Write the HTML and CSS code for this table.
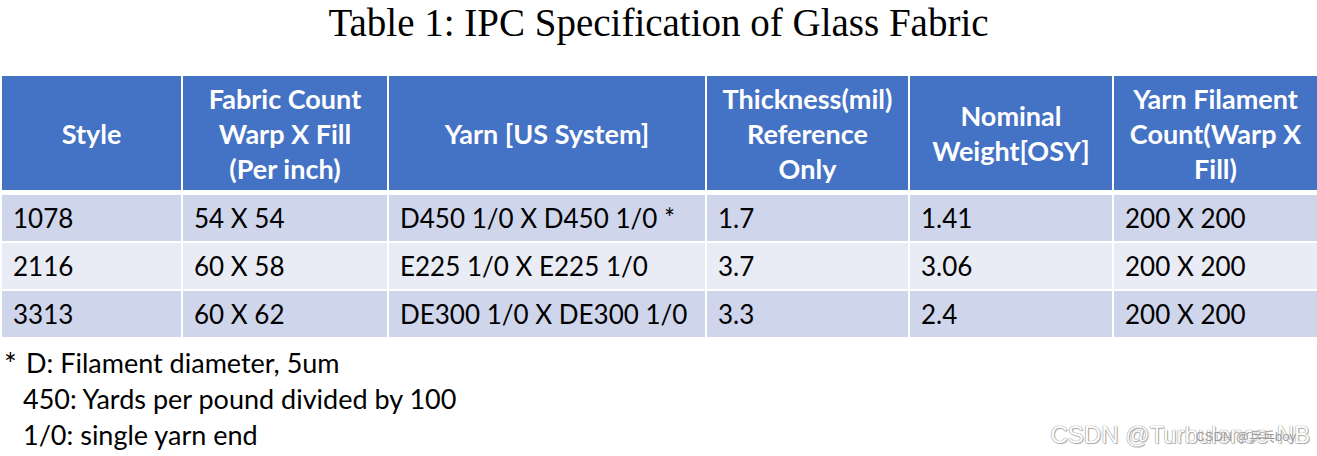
FILE: index.html
```html
<!DOCTYPE html>
<html lang="en">
<head>
<meta charset="utf-8">
<title>Table 1: IPC Specification of Glass Fabric</title>
<link rel="stylesheet" href="styles.css">
</head>
<body>
<div class="page">
  <h1 class="caption">Table 1: IPC Specification of Glass Fabric</h1>
  <table class="spec">
    <colgroup>
      <col class="c1"><col class="c2"><col class="c3"><col class="c4"><col class="c5"><col class="c6">
    </colgroup>
    <thead>
      <tr>
        <th>Style</th>
        <th>Fabric Count<br>Warp X Fill<br>(Per inch)</th>
        <th>Yarn [US System]</th>
        <th>Thickness(mil)<br>Reference<br>Only</th>
        <th>Nominal<br>Weight[OSY]</th>
        <th>Yarn Filament<br>Count(Warp X<br>Fill)</th>
      </tr>
    </thead>
    <tbody>
      <tr class="odd"><td>1078</td><td>54 X 54</td><td>D450 1/0 X D450 1/0 *</td><td>1.7</td><td>1.41</td><td>200 X 200</td></tr>
      <tr class="even"><td>2116</td><td>60 X 58</td><td>E225 1/0 X E225 1/0</td><td>3.7</td><td>3.06</td><td>200 X 200</td></tr>
      <tr class="odd"><td>3313</td><td>60 X 62</td><td>DE300 1/0 X DE300 1/0</td><td>3.3</td><td>2.4</td><td>200 X 200</td></tr>
    </tbody>
  </table>
  <div class="notes">
    <p class="note first"><span class="star">*</span>D: Filament diameter, 5um</p>
    <p class="note">450: Yards per pound divided by 100</p>
    <p class="note">1/0: single yarn end</p>
  </div>
  <div class="watermark">
    <span class="wm-main">CSDN @Turbulence-NB</span>
    <span class="wm-small">CSDN @乒乓boy</span>
  </div>
</div>
</body>
</html>
```
FILE: styles.css
```css
html, body {
  margin: 0;
  padding: 0;
  background: #ffffff;
}
.page {
  position: relative;
  width: 1317px;
  height: 456px;
  overflow: hidden;
}
.caption {
  margin: 0;
  padding-top: 1px;
  height: 74px;
  box-sizing: border-box;
  text-align: center;
  font-family: "Liberation Serif", "Times New Roman", serif;
  font-weight: normal;
  font-size: 39px;
  line-height: 44px;
  color: #000;
}
.spec {
  border-collapse: collapse;
  table-layout: fixed;
  width: 1317px;
  font-family: Lato, "Open Sans", sans-serif;
  font-size: 26px;
}
.c1 { width: 181px; }
.c2 { width: 206px; }
.c3 { width: 318px; }
.c4 { width: 203px; }
.c5 { width: 204px; }
.c6 { width: 205px; }
.spec th, .spec td {
  border: 2px solid #ffffff;
  padding: 0;
}
.spec th {
  background: #4472c4;
  color: #ffffff;
  font-weight: bold;
  font-size: 27px;
  text-align: center;
  height: 114px;
  line-height: 35px;
  border-bottom-width: 5px;
}
.spec td {
  height: 46px;
  color: #000;
  padding-left: 11px;
  text-align: left;
  vertical-align: middle;
}
.spec tr.odd td { background: #cfd5ea; }
.spec tr.even td { background: #e9ebf5; }
.notes {
  padding-top: 6px;
  font-family: Lato, "Open Sans", sans-serif;
  font-size: 27px;
  color: #000;
}
.note {
  margin: 0;
  line-height: 36px;
  padding-left: 23px;
}
.note.first {
  padding-left: 4px;
}
.star {
  display: inline-block;
  width: 22px;
  font-size: 30px;
  vertical-align: top;
  line-height: 36px;
}
.watermark {
  position: absolute;
  right: 7px;
  bottom: 7px;
  font-family: "Liberation Sans", Arial, "Noto Sans CJK SC", sans-serif;
}
.wm-main {
  font-size: 24px;
  color: #ffffff;
  text-shadow: 0 0 1px #8a8a8a, 0 0 1px #8a8a8a, 1px 1px 1px #b0b0b0;
}
.wm-small {
  position: absolute;
  right: 14px;
  bottom: 4px;
  font-size: 13px;
  white-space: nowrap;
  color: #9a9a9a;
  text-shadow: 0 0 1px #ffffff;
}
```
